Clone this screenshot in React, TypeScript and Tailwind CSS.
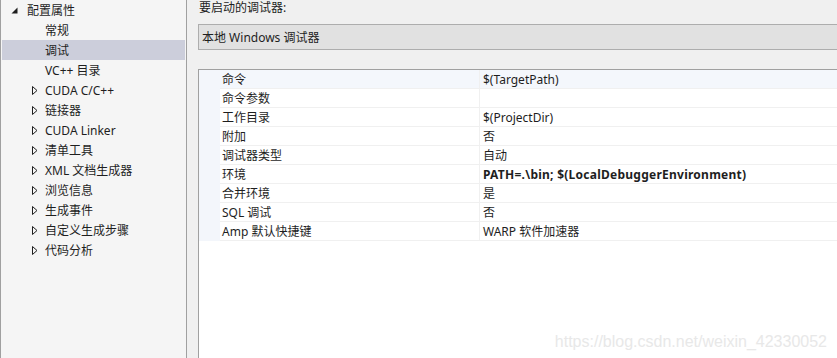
import React from 'react';

interface TreeItem {
  label: string;
  level: number;
  expander: 'open' | 'closed' | 'none';
  selected?: boolean;
}

interface PropRow {
  name: string;
  value: string;
  bold?: boolean;
  active?: boolean;
}

const treeItems: TreeItem[] = [
  { label: '配置属性', level: 0, expander: 'open' },
  { label: '常规', level: 1, expander: 'none' },
  { label: '调试', level: 1, expander: 'none', selected: true },
  { label: 'VC++ 目录', level: 1, expander: 'none' },
  { label: 'CUDA C/C++', level: 1, expander: 'closed' },
  { label: '链接器', level: 1, expander: 'closed' },
  { label: 'CUDA Linker', level: 1, expander: 'closed' },
  { label: '清单工具', level: 1, expander: 'closed' },
  { label: 'XML 文档生成器', level: 1, expander: 'closed' },
  { label: '浏览信息', level: 1, expander: 'closed' },
  { label: '生成事件', level: 1, expander: 'closed' },
  { label: '自定义生成步骤', level: 1, expander: 'closed' },
  { label: '代码分析', level: 1, expander: 'closed' },
];

const propRows: PropRow[] = [
  { name: '命令', value: '$(TargetPath)', active: true },
  { name: '命令参数', value: '' },
  { name: '工作目录', value: '$(ProjectDir)' },
  { name: '附加', value: '否' },
  { name: '调试器类型', value: '自动' },
  { name: '环境', value: 'PATH=.\\bin; $(LocalDebuggerEnvironment)', bold: true },
  { name: '合并环境', value: '是' },
  { name: 'SQL 调试', value: '否' },
  { name: 'Amp 默认快捷键', value: 'WARP 软件加速器' },
];

function Expander({ kind }: { kind: TreeItem['expander'] }) {
  if (kind === 'open') {
    return (
      <svg width="7" height="7" viewBox="0 0 7 7" className="block">
        <polygon points="6.5,0.5 6.5,6.5 0.5,6.5" fill="#1e1e1e" />
      </svg>
    );
  }
  if (kind === 'closed') {
    return (
      <svg width="6" height="9" viewBox="0 0 6 9" className="block">
        <polygon points="0.5,0.5 5,4.5 0.5,8.5" fill="none" stroke="#1e1e1e" strokeWidth="1" />
      </svg>
    );
  }
  return null;
}

export default function App() {
  return (
    <div
      className="flex h-[358px] w-[837px] overflow-hidden bg-[#f0f0f0] text-[12px] text-[#1e1e1e]"
      style={{ fontFamily: '"Noto Sans", "Noto Sans CJK SC", sans-serif' }}
    >
      {/* tree */}
      <aside className="w-[187px] shrink-0 border-l border-r border-[#a0a0a0] bg-[#f5f5f5]">
        {treeItems.map((item) => (
          <div
            key={item.label}
            className={`mx-px flex h-5 items-center ${item.selected ? 'bg-[#cccedb]' : ''}`}
          >
            <div
              className={`flex shrink-0 ${item.level === 0 ? 'ml-[9px] w-[16px]' : 'ml-[30px] w-[13px]'}`}
            >
              <Expander kind={item.expander} />
            </div>
            <span className="leading-[20px] pt-px">{item.label}</span>
          </div>
        ))}
      </aside>

      {/* right side */}
      <main className="flex min-w-0 flex-1 flex-col pl-[11px]">
        <div className="h-[20px] pl-px leading-[16px]">要启动的调试器:</div>
        <div className="mt-[4px] h-[26px] border border-r-0 border-[#adadad] bg-[#e1e1e1] pl-[3px] leading-[25px]">
          本地 Windows 调试器
        </div>

        <div className="mt-[19px] flex flex-1 flex-col border-l border-t border-[#a0a0a0] bg-white">
          {propRows.map((row) => (
            <div key={row.name} className={`flex h-[19px] ${row.active ? 'bg-[#f4f7fc]' : ''}`}>
              <div className="w-[21px] shrink-0 bg-[#f3f6fb]" />
              <div className="w-[260px] shrink-0 border-b border-r border-[#f0f0f0] pl-[2px] leading-[20px]">
                {row.name}
              </div>
              <div
                className={`flex-1 border-b border-[#f0f0f0] pl-[3px] leading-[20px] ${row.bold ? 'font-bold tracking-[0.25px]' : ''}`}
              >
                {row.value}
              </div>
            </div>
          ))}
          <div className="relative flex-1">
            <span
              className="absolute bottom-[8px] right-[10px] text-[16px] leading-none text-[#e8e8e8]"
              style={{ fontFamily: '"Liberation Sans", Arial, sans-serif' }}
            >
              https://blog.csdn.net/weixin_42330052
            </span>
          </div>
        </div>
      </main>
    </div>
  );
}
